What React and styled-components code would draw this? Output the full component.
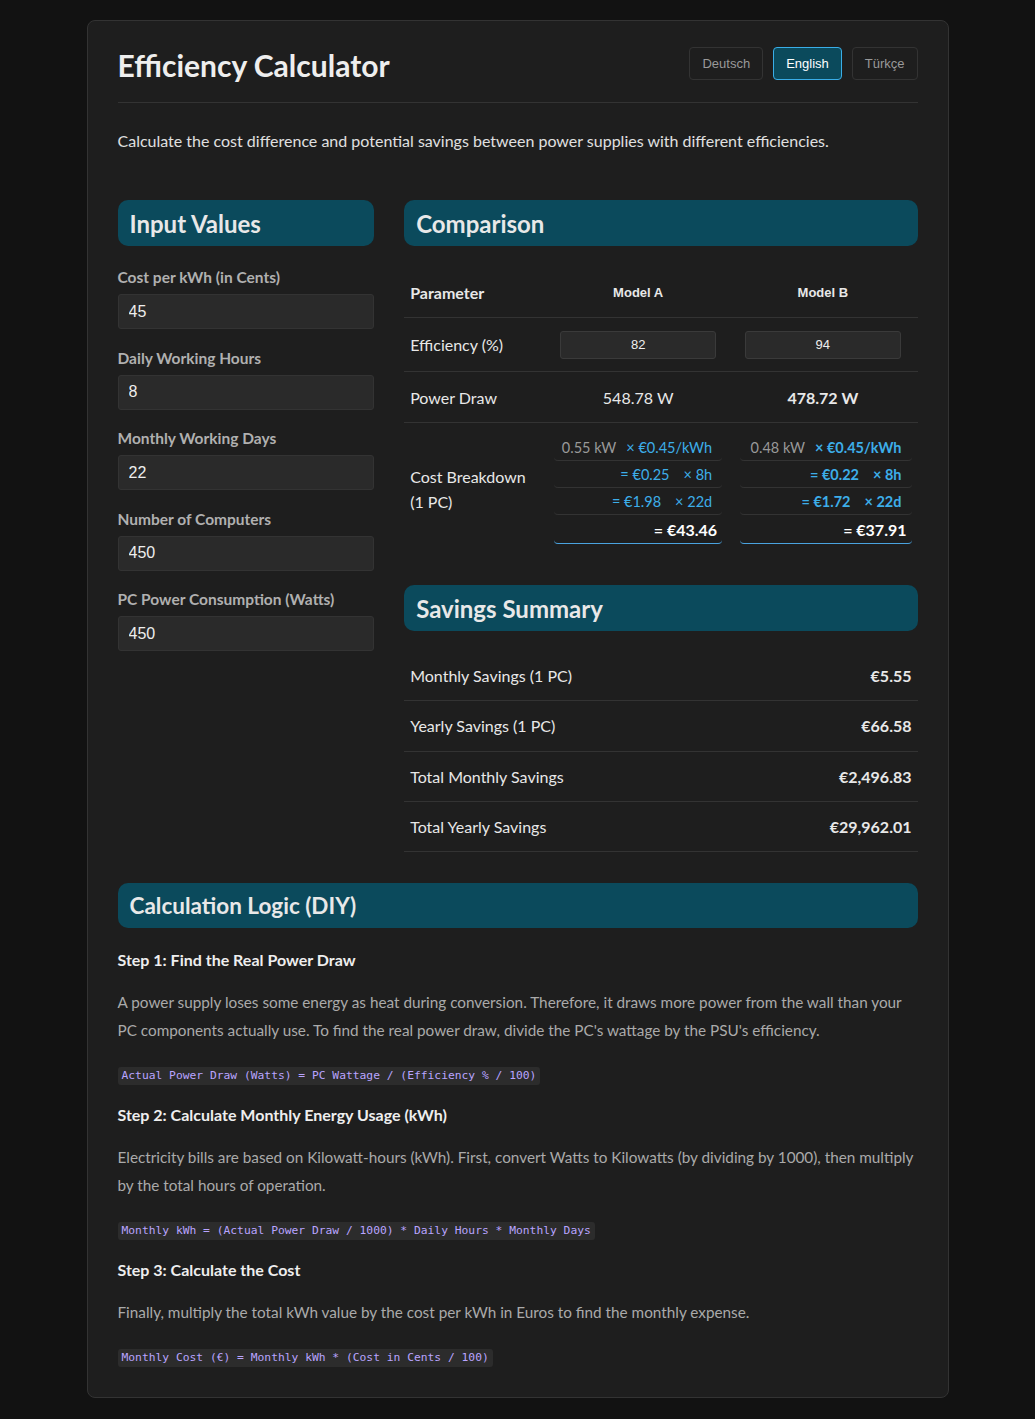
import React from 'react'
import styled, { createGlobalStyle } from 'styled-components'

const GlobalStyle = createGlobalStyle`
  body {
    margin: 0;
    background: #121212;
    font-family: Lato, "Noto Sans", sans-serif;
    color: #e0e0e0;
  }
`

const Page = styled.div`
  padding: 20px 0 21px;
`

const Container = styled.div`
  width: 800px;
  margin: 0 auto;
  padding: 24px 30px 30px;
  background: #1e1e1e;
  border: 1px solid #333;
  border-radius: 8px;
`

const Header = styled.header`
  display: flex;
  justify-content: space-between;
  align-items: center;
  height: 37px;
  padding-bottom: 20px;
  border-bottom: 1px solid #333;
`

const Title = styled.h1`
  margin: 4px 0 0;
  font-size: 30px;
  font-weight: 700;
  color: #eee;
  line-height: 37px;
`

const LangSwitch = styled.div`
  display: flex;
  gap: 10px;
`

const LangButton = styled.button`
  height: 33px;
  padding: 0 12px;
  font-family: "Liberation Sans", Arial, sans-serif;
  font-size: 13px;
  border-radius: 4px;
  border: 1px solid ${p => (p.$active ? '#3aaee8' : '#333')};
  background: ${p => (p.$active ? '#0b4a5c' : 'transparent')};
  color: ${p => (p.$active ? '#fff' : '#999')};
`

const Intro = styled.p`
  margin: 27px 0 48px;
  font-size: 16px;
  line-height: 22px;
  color: #e0e0e0;
`

const Grid = styled.div`
  display: grid;
  grid-template-columns: minmax(0, 1fr) minmax(0, 2fr);
  gap: 30px;
`

const Column = styled.section`
  display: flex;
  flex-direction: column;
  min-width: 0;
`

const SectionTitle = styled.h2`
  margin: 0;
  height: ${p => p.$h || 46}px;
  display: flex;
  align-items: center;
  padding: 0 12px;
  background: #0b4a5c;
  border-radius: 10px;
  font-size: ${p => p.$size || 24}px;
  font-weight: 700;
  color: #e8e8e8;
`

const Fields = styled.div`
  display: flex;
  flex-direction: column;
  gap: 18.5px;
  margin-top: 21px;
`

const Field = styled.label`
  display: flex;
  flex-direction: column;
  gap: 7px;
`

const FieldLabel = styled.span`
  font-size: 15.5px;
  line-height: 20px;
  font-weight: 700;
  color: #b0b0b0;
`

const Input = styled.input`
  box-sizing: border-box;
  height: 35px;
  width: 100%;
  padding: 0 10px;
  background: #2a2a2a;
  border: 1px solid #333;
  border-radius: 3px;
  color: #eee;
  font-family: "Liberation Sans", Arial, sans-serif;
  font-size: 16px;
  outline: none;
`

const Table = styled.div`
  margin-top: 19px;
  display: grid;
  grid-template-columns: 144px 180px minmax(0, 1fr);
`

const Cell = styled.div`
  display: flex;
  align-items: center;
  justify-content: ${p => (p.$left ? 'flex-start' : 'center')};
  min-height: ${p => p.$h || 50}px;
  padding: 0 6px;
  border-bottom: ${p => (p.$noBorder ? 'none' : '1px solid #333')};
  font-size: 16px;
  font-weight: ${p => (p.$bold ? 700 : 400)};
  color: #e8e8e8;
`

const HeadCell = styled(Cell)`
  font-family: ${p => (p.$left ? 'Lato, sans-serif' : '"Liberation Sans", Arial, sans-serif')};
  font-size: ${p => (p.$left ? 16 : 13)}px;
  font-weight: 700;
  padding-top: 2px;
`

const ParamLabel = styled.span`
  line-height: 25px;
`

const EffInput = styled.input`
  box-sizing: border-box;
  width: 156px;
  height: 28px;
  background: #2a2a2a;
  border: 1px solid #3a3a3a;
  border-radius: 3px;
  color: #eee;
  text-align: center;
  font-family: "Liberation Sans", Arial, sans-serif;
  font-size: 13px;
  outline: none;
`

const Breakdown = styled.div`
  width: 100%;
  min-width: 0;
  display: flex;
  flex-direction: column;
  padding: 11px 0 10px ${p => p.$inset || 0}px;
`

const Step = styled.div`
  display: flex;
  justify-content: flex-end;
  gap: ${p => p.$gap || 10}px;
  align-items: center;
  white-space: nowrap;
  height: ${p => (p.$total ? 28 : 26)}px;
  padding: 0 ${p => (p.$total ? 5 : 10)}px 0 0;
  border-bottom: 1px solid ${p => (p.$total ? '#4aa3df' : '#333')};
  border-radius: 0 0 4px 4px;
  font-size: ${p => (p.$total ? 16 : 14.5)}px;
  font-weight: ${p => (p.$bold || p.$total ? 700 : 400)};
  color: ${p => (p.$total ? '#fff' : '#3daee9')};
`

const Muted = styled.span`
  color: #999;
  font-weight: 400;
`

const SummaryBlock = styled.div`
  margin-top: 31px;
`

const Summary = styled.div`
  margin-top: 20px;
  display: flex;
  flex-direction: column;
`

const SummaryRow = styled.div`
  display: flex;
  justify-content: space-between;
  align-items: center;
  height: 49.3px;
  padding: 0 6px;
  border-bottom: 1px solid #333;
  font-size: 16px;
  color: #e8e8e8;
`

const SummaryValue = styled.span`
  font-weight: 700;
`

const Logic = styled.section`
  margin-top: 31px;
`

const StepTitle = styled.h3`
  margin: 22px 0 0;
  font-size: 16px;
  line-height: 20px;
  font-weight: 700;
  color: #eee;
`

const StepText = styled.p`
  margin: 18px 0 0;
  font-size: 15.3px;
  line-height: 28px;
  color: #aaa;
`

const CodeLine = styled.div`
  margin: 20px 0 0;
  line-height: 18px;
  & + ${StepTitle} {
    margin-top: 20px;
  }
`

const Code = styled.code`
  display: inline-block;
  padding: 0 4px;
  background: #2c2c2c;
  border-radius: 3px;
  color: #b9a4ff;
  font-family: "DejaVu Sans Mono", monospace;
  font-size: 11.3px;
  line-height: 18px;
`

const inputs = [
  ['Cost per kWh (in Cents)', '45'],
  ['Daily Working Hours', '8'],
  ['Monthly Working Days', '22'],
  ['Number of Computers', '450'],
  ['PC Power Consumption (Watts)', '450']
]

const summary = [
  ['Monthly Savings (1 PC)', '€5.55'],
  ['Yearly Savings (1 PC)', '€66.58'],
  ['Total Monthly Savings', '€2,496.83'],
  ['Total Yearly Savings', '€29,962.01']
]

function BreakdownCell({ kw, hourly, daily, total, bold, inset }) {
  return (
    <Breakdown $inset={inset}>
      <Step $bold={bold}><Muted>{kw} kW</Muted><span>× €0.45/kWh</span></Step>
      <Step $bold={bold} $gap={14}><span>= {hourly}</span><span>× 8h</span></Step>
      <Step $bold={bold} $gap={14}><span>= {daily}</span><span>× 22d</span></Step>
      <Step $total>= {total}</Step>
    </Breakdown>
  )
}

export default function App() {
  return (
    <Page>
      <GlobalStyle />
      <Container>
        <Header>
          <Title>Efficiency Calculator</Title>
          <LangSwitch>
            <LangButton>Deutsch</LangButton>
            <LangButton $active>English</LangButton>
            <LangButton>Türkçe</LangButton>
          </LangSwitch>
        </Header>

        <Intro>Calculate the cost difference and potential savings between power supplies with different efficiencies.</Intro>

        <Grid>
          <Column>
            <SectionTitle>Input Values</SectionTitle>
            <Fields>
              {inputs.map(([label, value]) => (
                <Field key={label}>
                  <FieldLabel>{label}</FieldLabel>
                  <Input type="text" defaultValue={value} />
                </Field>
              ))}
            </Fields>
          </Column>

          <Column>
            <SectionTitle>Comparison</SectionTitle>
            <Table>
              <HeadCell $left $h={50}>Parameter</HeadCell>
              <HeadCell $h={50}>Model A</HeadCell>
              <HeadCell $h={50}>Model B</HeadCell>

              <Cell $left $h={53}>Efficiency (%)</Cell>
              <Cell $h={53}><EffInput defaultValue="82" /></Cell>
              <Cell $h={53}><EffInput defaultValue="94" /></Cell>

              <Cell $left $h={50}>Power Draw</Cell>
              <Cell $h={50}>548.78 W</Cell>
              <Cell $h={50} $bold>478.72 W</Cell>

              <Cell $left $noBorder>
                <ParamLabel>Cost Breakdown<br />(1 PC)</ParamLabel>
              </Cell>
              <Cell $noBorder>
                <BreakdownCell kw="0.55" hourly="€0.25" daily="€1.98" total="€43.46" />
              </Cell>
              <Cell $noBorder>
                <BreakdownCell kw="0.48" hourly="€0.22" daily="€1.72" total="€37.91" bold inset={6} />
              </Cell>
            </Table>

            <SummaryBlock>
              <SectionTitle>Savings Summary</SectionTitle>
              <Summary>
                {summary.map(([label, value]) => (
                  <SummaryRow key={label}>
                    <span>{label}</span>
                    <SummaryValue>{value}</SummaryValue>
                  </SummaryRow>
                ))}
              </Summary>
            </SummaryBlock>
          </Column>
        </Grid>

        <Logic>
          <SectionTitle $h={45} $size={22.5}>Calculation Logic (DIY)</SectionTitle>

          <StepTitle>Step 1: Find the Real Power Draw</StepTitle>
          <StepText>A power supply loses some energy as heat during conversion. Therefore, it draws more power from the wall than your PC components actually use. To find the real power draw, divide the PC's wattage by the PSU's efficiency.</StepText>
          <CodeLine><Code>Actual Power Draw (Watts) = PC Wattage / (Efficiency % / 100)</Code></CodeLine>

          <StepTitle>Step 2: Calculate Monthly Energy Usage (kWh)</StepTitle>
          <StepText>Electricity bills are based on Kilowatt-hours (kWh). First, convert Watts to Kilowatts (by dividing by 1000), then multiply by the total hours of operation.</StepText>
          <CodeLine><Code>Monthly kWh = (Actual Power Draw / 1000) * Daily Hours * Monthly Days</Code></CodeLine>

          <StepTitle>Step 3: Calculate the Cost</StepTitle>
          <StepText>Finally, multiply the total kWh value by the cost per kWh in Euros to find the monthly expense.</StepText>
          <CodeLine><Code>Monthly Cost (€) = Monthly kWh * (Cost in Cents / 100)</Code></CodeLine>
        </Logic>
      </Container>
    </Page>
  )
}
